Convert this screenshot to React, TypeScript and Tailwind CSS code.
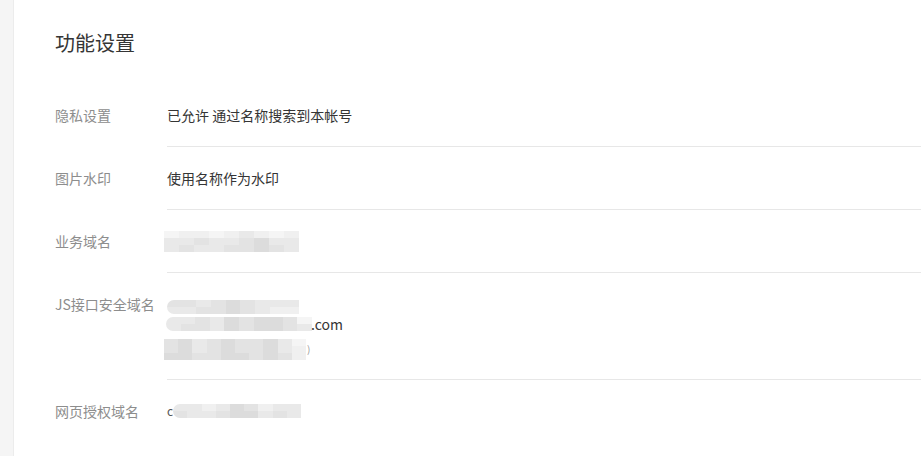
const FONT = { fontFamily: '"Noto Sans CJK SC", "Noto Sans", sans-serif' };

// pixelated blur boxes standing in for masked domain names
function Mosaic({ width, rows, rounded }: { width: number; rows: string[][]; rounded?: boolean }) {
  return (
    <span
      className={`inline-flex flex-col overflow-hidden align-middle ${rounded ? 'rounded-l-[7px]' : ''}`}
      style={{ width }}
    >
      {rows.map((cells, i) => (
        <span key={i} className="flex h-[7px]">
          {cells.map((c, j) => (
            <span key={j} className="flex-1" style={{ backgroundColor: c }} />
          ))}
        </span>
      ))}
    </span>
  );
}

const A = '#f0f0f0';
const B = '#e9e9e9';
const C = '#e3e3e3';
const D = '#dcdcdc';
const E = '#f5f5f5';

function Row({
  label,
  children,
  last,
  pb = 'pb-[21px]',
}: {
  label: string;
  children: React.ReactNode;
  last?: boolean;
  pb?: string;
}) {
  return (
    <div className="flex">
      <div className="w-[112px] shrink-0 pt-[21px] text-[14px] leading-[20px] text-[#8d8d8d]">{label}</div>
      <div
        className={`flex-1 pt-[21px] ${pb} text-[14px] leading-[20px] text-[#353535] ${last ? '' : 'border-b border-[#e7e7e7]'}`}
      >
        {children}
      </div>
    </div>
  );
}

export default function App() {
  return (
    <div className="flex h-[456px] w-[921px] overflow-hidden bg-white" style={FONT}>
      <div className="w-[14px] shrink-0 border-r border-[#ececec] bg-[#f5f5f5]" />
      <div className="flex-1 pl-[41px]">
        <h1 className="mt-[31px] mb-[29px] text-[20px] leading-[24px] font-normal text-[#353535]">功能设置</h1>

        <Row label="隐私设置">已允许 通过名称搜索到本帐号</Row>
        <Row label="图片水印">使用名称作为水印</Row>
        <Row label="业务域名">
          <div className="flex h-[20px] items-center -ml-[3px]">
            <Mosaic
              width={135}
              rows={[
                [E, A, A, E, A, B, A, E, A],
                [B, B, C, B, B, C, D, B, B],
                [B, C, B, B, C, C, D, C, B],
              ]}
            />
          </div>
        </Row>
        <Row label="JS接口安全域名" pb="pb-[20px]">
          <div className="flex h-[20px] items-end">
            <Mosaic
              width={132}
              rounded
              rows={[
                [C, C, B, C, D, C, B, B, B],
                [B, B, C, C, D, C, B, A, A],
              ]}
            />
          </div>
          <div className="flex h-[20px] items-center -ml-[1px]">
            <Mosaic
              width={146}
              rounded
              rows={[
                [B, B, C, B, D, C, D, D, C, E],
                [B, C, C, B, D, C, D, D, C, B],
              ]}
            />
            <span className="-ml-[1px]">.com</span>
          </div>
          <div className="mt-[5px] flex h-[20px] items-center -ml-[3px]">
            <Mosaic
              width={142}
              rows={[
                [C, D, B, C, D, C, C, D, B, E],
                [C, D, B, C, D, C, C, D, B, A],
                [D, D, C, C, D, D, C, D, C, A],
              ]}
            />
            <span className="ml-[1px] text-[10px] text-[#9a9a9a]">)</span>
          </div>
        </Row>
        <Row label="网页授权域名" last>
          <div className="flex h-[20px] items-center">
            <span className="text-[12px] text-[#555]">c</span>
            <Mosaic
              width={128}
              rounded
              rows={[
                [B, B, A, B, D, C, A, B, B],
                [C, B, B, C, D, D, B, C, B],
              ]}
            />
          </div>
        </Row>
      </div>
    </div>
  );
}
